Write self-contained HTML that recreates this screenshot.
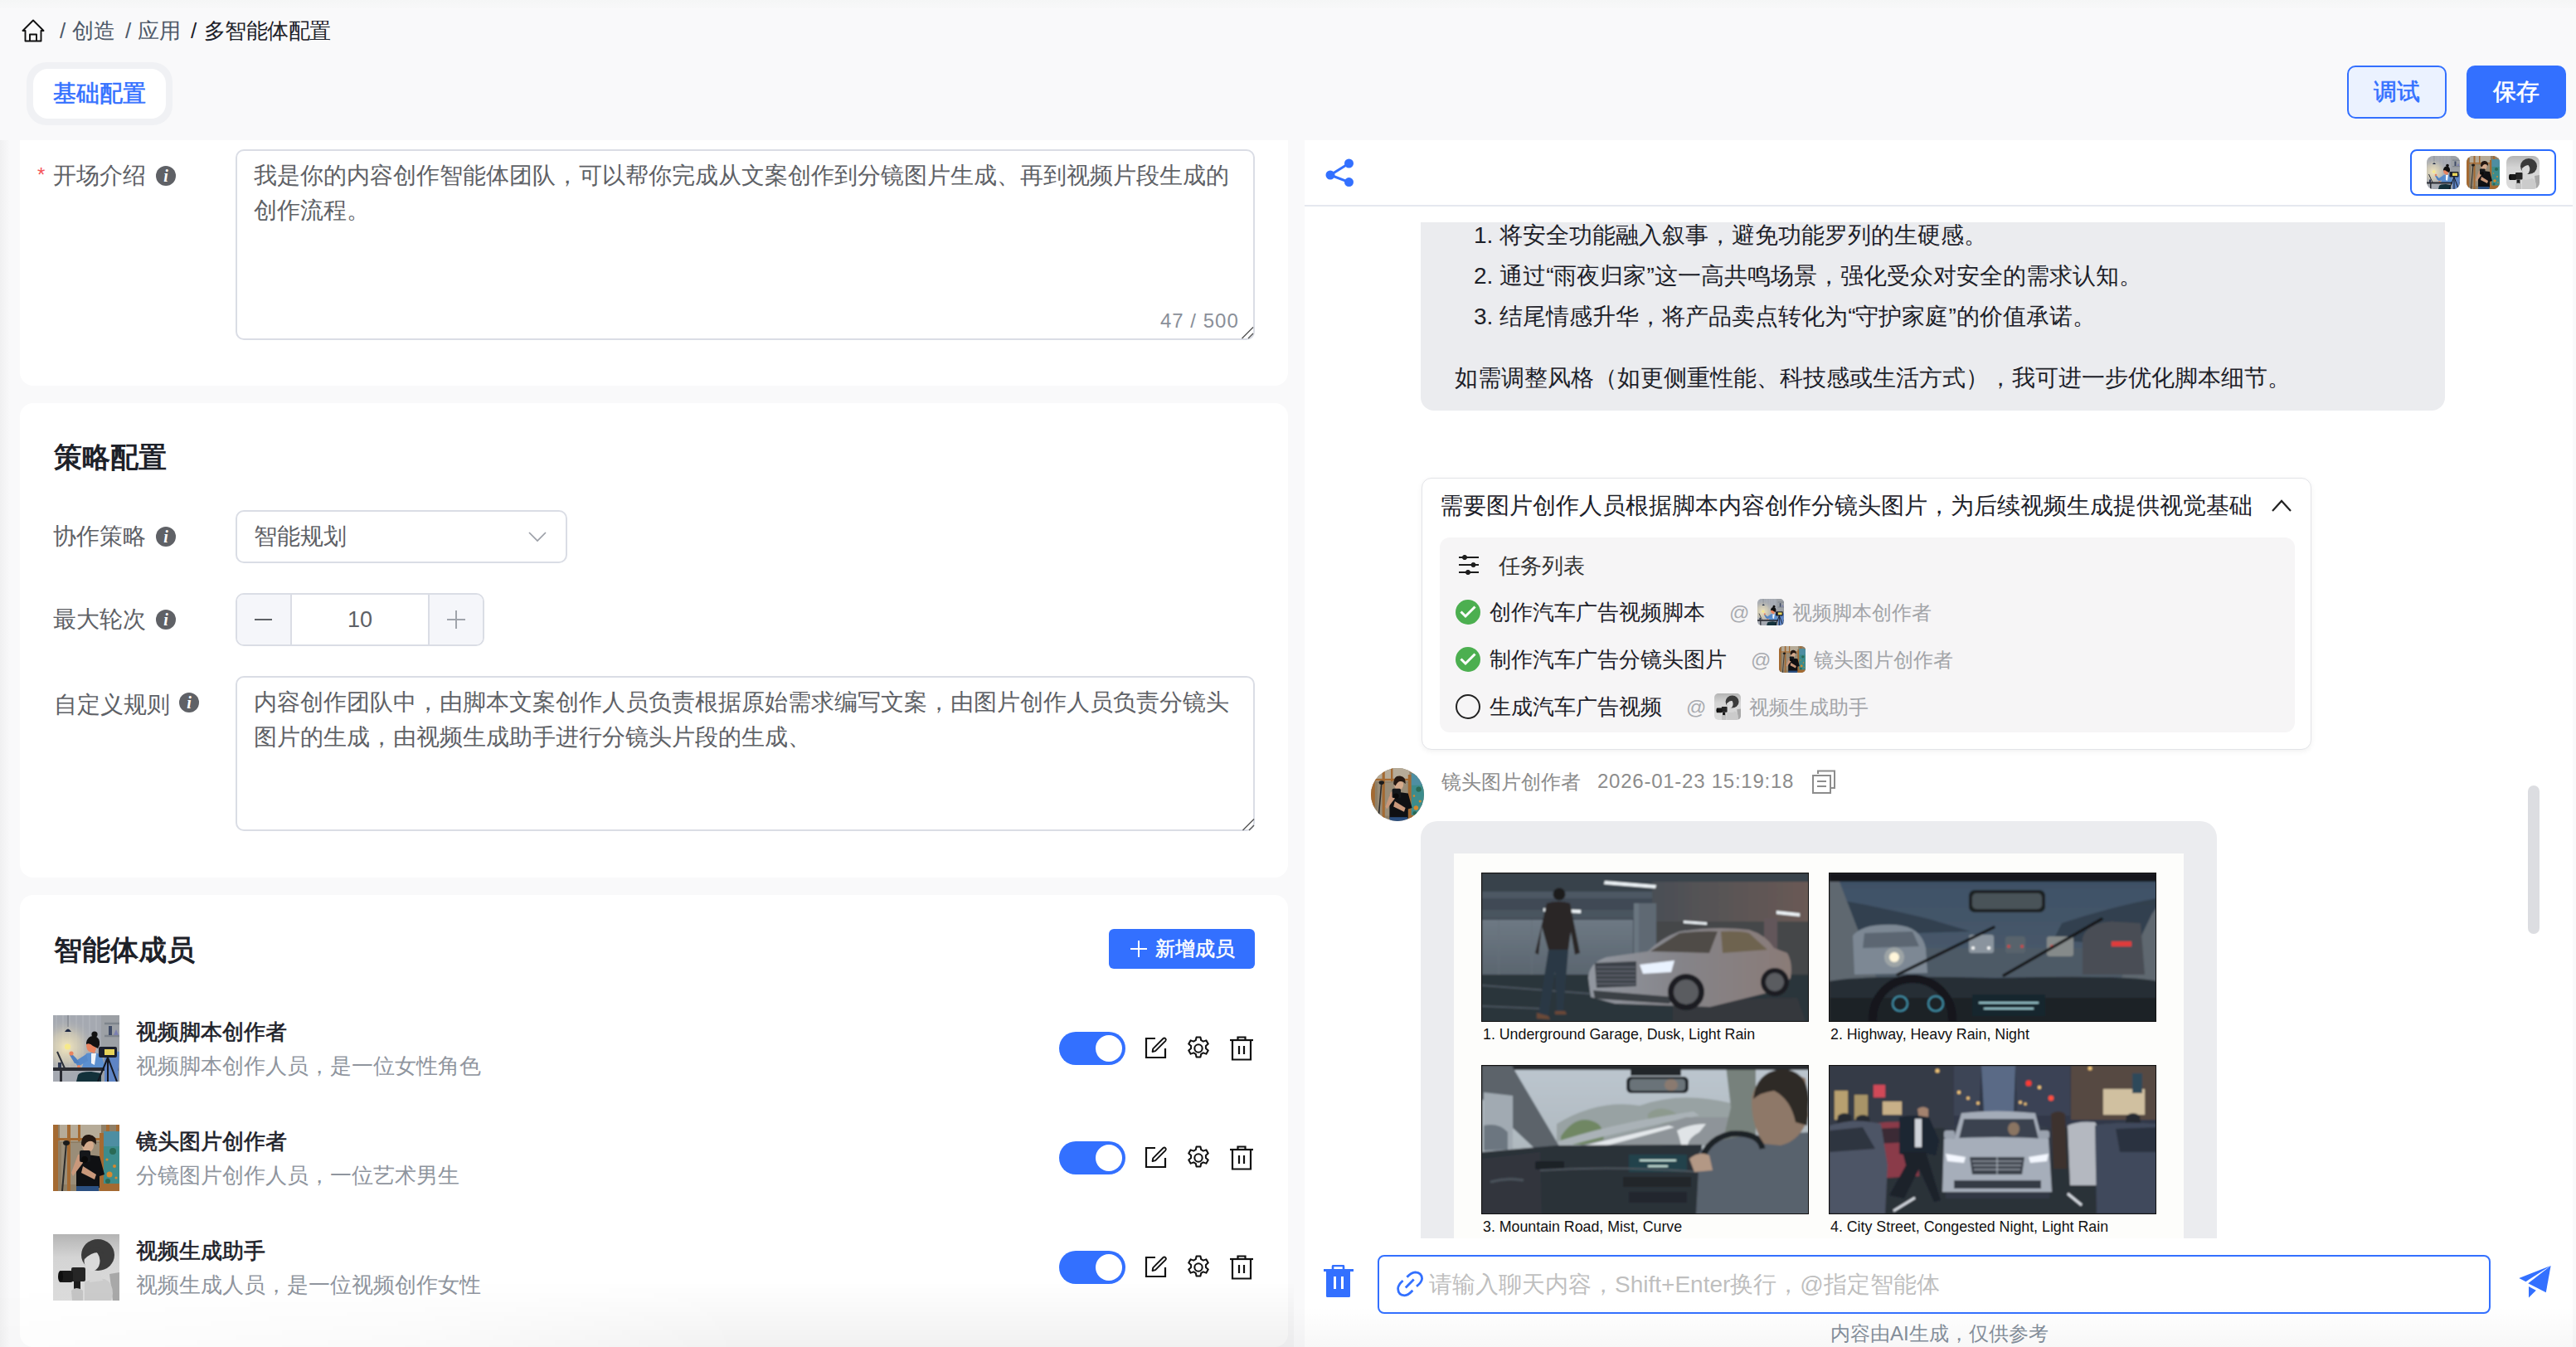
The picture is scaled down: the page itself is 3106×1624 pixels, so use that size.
<!DOCTYPE html>
<html><head><meta charset="utf-8">
<style>
*{box-sizing:border-box;margin:0;padding:0}
html,body{width:3106px;height:1624px;overflow:hidden;background:#f9f9fa;font-family:"Liberation Sans",sans-serif;color:#1d2129}
.a{position:absolute}
.t{white-space:nowrap}
.card{position:absolute;background:#fff;left:24px;width:1529px}
.lbl{position:absolute;font-size:28px;line-height:40px;color:#5e6166;white-space:nowrap}
.info{position:absolute;width:24px;height:24px;border-radius:50%;background:#5f6166;color:#fff;font:italic bold 20px/25px "Liberation Serif",serif;text-align:center}
.ta{position:absolute;border:2px solid #dadde5;border-radius:10px;background:#fff}
.tatext{position:absolute;font-size:28px;line-height:42px;color:#5e6166;white-space:nowrap}
</style></head><body>
<svg width="0" height="0" style="position:absolute"><defs>
<filter id="soft" x="-2%" y="-2%" width="104%" height="104%"><feGaussianBlur stdDeviation="0.8"/></filter>
<symbol id="av1" viewBox="0 0 80 80">
<radialGradient id="g1r" cx="0.2" cy="0.48" r="0.45"><stop offset="0" stop-color="#f3e7bd"/><stop offset="0.5" stop-color="#d7cfb6" stop-opacity="0.7"/><stop offset="1" stop-color="#a5a9b1" stop-opacity="0"/></radialGradient>
<rect width="80" height="80" fill="#a5a9b1"/>
<g stroke="#b3b7bd" stroke-width="1.2"><path d="M4 0V64M12 0V64M20 0V64M28 0V64M36 0V64M44 0V64M52 0V64"/></g>
<rect x="58" y="0" width="22" height="80" fill="#9ca0a5"/>
<rect width="80" height="80" fill="url(#g1r)"/>
<path d="M62 10H80M62 25H80" stroke="#7e848c" stroke-width="2.5"/><rect x="67" y="13" width="4" height="11" fill="#3f4b66"/><path d="M73 24L76 17L79 24Z" fill="#7a7fb0"/>
<path d="M18 0V14" stroke="#6b6f76" stroke-width="0.8"/><path d="M14 20Q18 13 22 20Z" fill="#1f2a44"/>
<circle cx="17.5" cy="38" r="3.6" fill="#f6e98a"/>
<path d="M5 44L14 64" stroke="#2a2e38" stroke-width="2"/><rect x="6" y="57" width="4" height="7" fill="#2f3a56"/>
<path d="M40 46Q48 44 58 47L64 66L34 66Z" fill="#5b8fcf"/>
<path d="M40 47L26 56L30 62L42 55Z" fill="#5689c9"/><path d="M22 46L28 52L32 58L26 58L20 48Z" fill="#4e7fbf"/>
<path d="M46 46L52 46L50 60L46 58Z" fill="#f2f4f7"/>
<circle cx="22" cy="46" r="2.6" fill="#e9845f"/><circle cx="31" cy="62" r="2" fill="#e9845f"/>
<path d="M40 35Q40 42 44 44L50 46L52 40L48 30Z" fill="#e9845f"/>
<path d="M40 33Q42 24 50 25Q57 27 56 36L54 40L48 37Q44 33 40 35Z" fill="#111"/><circle cx="50" cy="23" r="3.6" fill="#111"/>
<rect x="0" y="63" width="79" height="4" fill="#2a2c33"/><rect x="8" y="66" width="3" height="14" fill="#2a2c33"/>
<path d="M30 72Q32 68 46 68L58 70L58 80L28 80Z" fill="#13313a"/>
<path d="M62 42L80 44L78 80L62 80Z" fill="#5e84c4"/>
<rect x="55" y="38" width="22" height="13" rx="2" fill="#1b1f2c"/><rect x="62" y="41" width="12" height="7" fill="#e7d35a"/>
<g stroke="#141821" stroke-width="2"><path d="M66 51L54 80M66 51L77 80M66 51V80"/></g>
</symbol>
<symbol id="av2" viewBox="0 0 80 80">
<rect width="80" height="80" fill="#8f7f66"/>
<rect x="8" y="0" width="50" height="20" fill="#b6ab98"/><rect x="10" y="22" width="46" height="50" fill="#9a8d78"/>
<g fill="#a46a32"><rect x="0" y="0" width="6" height="80"/><rect x="17" y="0" width="4" height="80"/><rect x="30" y="0" width="3" height="20"/><rect x="0" y="16" width="60" height="3"/><rect x="56" y="10" width="5" height="70"/><rect x="64" y="0" width="4" height="10"/><rect x="76" y="0" width="4" height="10"/><rect x="59" y="70" width="21" height="10"/></g>
<rect x="61" y="8" width="19" height="63" fill="#3d8c8c"/>
<path d="M61 8H80V26H61Z" fill="#5a8fb0" opacity="0.6"/>
<g fill="#d68a2e"><circle cx="68" cy="60" r="3.5"/><circle cx="74" cy="50" r="2"/><circle cx="65" cy="42" r="1.6"/><circle cx="76" cy="64" r="1.6"/></g><g fill="#2a6a55"><circle cx="72" cy="32" r="4"/><circle cx="66" cy="68" r="3"/></g>
<path d="M16 22L11 80" stroke="#2a2a2a" stroke-width="2"/><ellipse cx="16" cy="22" rx="4" ry="3" fill="#1b1b1b"/>
<path d="M28 42Q32 37 40 36L56 38L62 60L56 62L56 76L28 76Z" fill="#0f1013"/>
<path d="M30 36L36 36L36 46L24 62L22 58Z" fill="#c9987b"/><path d="M36 50L52 60L50 66L34 58Z" fill="#c9987b"/>
<ellipse cx="42" cy="25" rx="7" ry="8" fill="#d4aa8c"/>
<path d="M34 24Q34 11 44 12Q53 13 52 24L49 21Q41 17 37 27Z" fill="#241812"/>
<rect x="32" y="31" width="13" height="14" rx="2" fill="#15171a"/><circle cx="38" cy="42" r="4" fill="#0a0a0a"/>
<rect x="28" y="74" width="27" height="6" fill="#2b4f80"/>
</symbol>
<symbol id="av3" viewBox="0 0 80 80">
<linearGradient id="g3bg" x1="0" y1="0" x2="0" y2="1"><stop offset="0" stop-color="#b4b4b4"/><stop offset="0.35" stop-color="#d4d4d4"/><stop offset="1" stop-color="#dcdcdc"/></linearGradient>
<rect width="80" height="80" fill="url(#g3bg)"/>
<path d="M68 48L80 46V80H72Z" fill="#a8a8a8"/>
<path d="M38 58Q50 52 62 54Q72 58 72 72L70 80L38 80Z" fill="#cbcbcb"/>
<path d="M46 40L56 44L60 56L44 58Z" fill="#d6d6d6"/>
<ellipse cx="54" cy="25" rx="20" ry="19" fill="#3b3b3b"/>
<ellipse cx="47" cy="32" rx="9.5" ry="12.5" fill="#dadada"/>
<path d="M36 26Q42 14 56 16L62 24Q50 18 38 30Z" fill="#3b3b3b"/>
<rect x="22" y="40" width="17" height="17" rx="2" fill="#262626"/>
<rect x="8" y="44" width="16" height="14" rx="3" fill="#1a1a1a"/><ellipse cx="9" cy="51" rx="3" ry="7" fill="#0e0e0e"/>
<rect x="25" y="57" width="8" height="15" fill="#1c1c1c"/>
<path d="M22 68Q28 62 36 68L36 80L23 80Z" fill="#c4c4c4"/>
</symbol>

<symbol id="img1" viewBox="0 0 395 180">
<linearGradient id="i1wall" x1="0" y1="0" x2="0" y2="1"><stop offset="0" stop-color="#6e7984"/><stop offset="1" stop-color="#59646e"/></linearGradient>
<linearGradient id="i1warm" x1="0" y1="0" x2="1" y2="0"><stop offset="0" stop-color="#4a4f55"/><stop offset="1" stop-color="#6a5a55"/></linearGradient>
<linearGradient id="i1car" x1="0" y1="0" x2="1" y2="0"><stop offset="0" stop-color="#9297a0"/><stop offset="0.45" stop-color="#858489"/><stop offset="1" stop-color="#8a7b77"/></linearGradient>
<g filter="url(#soft)">
<rect width="395" height="180" fill="#3f4a55"/>
<rect x="0" y="0" width="395" height="22" fill="#38424c"/>
<rect x="0" y="22" width="395" height="8" fill="#4d5863"/>
<rect x="205" y="10" width="190" height="50" fill="url(#i1warm)"/>
<rect x="0" y="44" width="205" height="10" fill="#4a555f"/>
<rect x="0" y="56" width="182" height="70" fill="url(#i1wall)"/>
<path d="M20 56V124M60 56V124" stroke="#66717b" stroke-width="1"/>
<rect x="183" y="36" width="27" height="90" fill="#5e6973"/><rect x="183" y="36" width="6" height="90" fill="#6b7680"/>
<rect x="210" y="58" width="185" height="64" fill="#45464a"/>
<rect x="340" y="54" width="16" height="70" fill="#62575a"/>
<g fill="#eef4f8"><path d="M148 9L210 14L209 18L147 13Z"/><path d="M74 42L119 44L119 48L74 46Z"/><path d="M243 57L271 59L271 62L243 60Z"/><path d="M355 45L383 48L383 52L355 49Z"/></g>
<rect x="0" y="122" width="395" height="58" fill="#2c343b"/>
<path d="M0 135L130 145M0 160L70 163" stroke="#4a545e" stroke-width="2"/>
<path d="M230 160Q300 150 380 150L390 178L230 178Z" fill="#3b3a3d" opacity="0.6"/>
<circle cx="93" cy="25" r="7.5" fill="#1f1d1c"/>
<path d="M78 36Q92 32 106 36L118 96L112 98L107 70L104 92L80 92L72 64L68 98L64 96Z" fill="#2a2726"/>
<path d="M80 92L104 92L98 165L90 168L88 118L80 172L68 170Z" fill="#2c3945"/>
<path d="M66 168L80 172L82 176L66 175Z M88 166L100 166L102 170L88 170Z" fill="#6b4a38"/>
<path d="M128 126Q129 108 150 101L200 94Q216 78 238 70Q282 63 322 68Q342 74 352 90L368 96Q375 108 372 126L360 140L275 161L160 157L131 149Z" fill="url(#i1car)"/>
<path d="M203 94L238 72Q262 69 284 70L274 96Z" fill="#4f4c46"/><path d="M288 70Q312 69 322 72L344 92L290 96Z" fill="#6e6350"/>
<path d="M136 108L186 106L186 136L138 138Z" fill="#3a3f46"/><path d="M138 113H185M138 118H185M138 123H185M138 128H185M138 133H185" stroke="#7b8089" stroke-width="1.1"/>
<path d="M190 110L232 105L228 119L194 121Z" fill="#eaf3ff"/>
<path d="M134 141L230 149L226 157L136 151Z" fill="#3b3f45"/>
<circle cx="246" cy="143" r="22" fill="#1c1f22"/><circle cx="246" cy="143" r="15" fill="#5a5c61"/>
<circle cx="353" cy="131" r="17" fill="#1c1f22"/><circle cx="353" cy="131" r="11" fill="#5a5c61"/>
</g>
</symbol>
<symbol id="img2" viewBox="0 0 395 180">
<g filter="url(#soft)">
<linearGradient id="i2sky" x1="0" y1="0" x2="0" y2="1"><stop offset="0" stop-color="#3d5066"/><stop offset="1" stop-color="#52606e"/></linearGradient>
<rect width="395" height="180" fill="url(#i2sky)"/>
<path d="M0 30Q60 40 120 55L170 70L0 75Z" fill="#2d3b48" opacity="0.8"/><path d="M280 60Q340 40 395 30V90L270 80Z" fill="#2e3c48" opacity="0.8"/>
<rect x="0" y="90" width="395" height="35" fill="#4e5a66"/>
<rect x="0" y="0" width="395" height="10" fill="#15191c"/>
<path d="M0 10L12 10L58 130L0 140Z" fill="#5e6770"/><path d="M395 40L395 140L350 130L388 50Z" fill="#5e6770"/>
<path d="M28 75Q40 60 80 62Q110 64 116 90L118 120L30 122Z" fill="#7d8894"/><path d="M42 72L100 70L108 88L40 90Z" fill="#5b6672"/>
<circle cx="78" cy="101" r="6" fill="#fff6da"/><circle cx="78" cy="101" r="12" fill="#fff6da" opacity="0.25"/>
<rect x="168" y="74" width="30" height="22" rx="3" fill="#8a949e"/><circle cx="173" cy="90" r="2" fill="#fff"/><circle cx="192" cy="90" r="2" fill="#fff"/>
<rect x="212" y="76" width="24" height="20" rx="3" fill="#59636c"/><circle cx="216" cy="88" r="1.8" fill="#e04040"/><circle cx="232" cy="88" r="1.8" fill="#e04040"/>
<rect x="262" y="76" width="32" height="24" rx="3" fill="#858a8a"/><circle cx="268" cy="88" r="2" fill="#e04848"/>
<path d="M305 78Q310 60 340 58L375 60L380 122L305 122Z" fill="#494d54"/><rect x="340" y="82" width="24" height="6" fill="#e03a3a"/>
<g stroke="#121518" stroke-width="3.5" stroke-linecap="round"><path d="M82 122L198 65"/><path d="M210 123L328 55"/></g>
<rect x="168" y="20" width="92" height="27" rx="7" fill="#1b2024"/><rect x="172" y="24" width="84" height="19" rx="5" fill="#4a5359"/>
<path d="M0 130Q40 122 200 126Q360 122 395 130V180H0Z" fill="#262e36"/>
<rect x="0" y="150" width="395" height="30" fill="#1c2127"/>
<circle cx="100" cy="175" r="48" fill="none" stroke="#14181c" stroke-width="10"/>
<circle cx="85" cy="157" r="9" fill="none" stroke="#4aa8c4" stroke-width="1.5"/><circle cx="128" cy="157" r="9" fill="none" stroke="#4aa8c4" stroke-width="1.5"/>
<rect x="172" y="146" width="88" height="26" fill="#17252e"/><path d="M180 156H252M186 163H246" stroke="#9ac8d0" stroke-width="2"/>
</g>
</symbol>
<symbol id="img3" viewBox="0 0 395 180">
<linearGradient id="i3sky" x1="0" y1="0" x2="0" y2="1"><stop offset="0" stop-color="#bcc6cf"/><stop offset="1" stop-color="#a5aeb2"/></linearGradient>
<g filter="url(#soft)">
<rect width="395" height="180" fill="url(#i3sky)"/>
<path d="M90 70Q140 40 190 48Q240 30 300 45V95H90Z" fill="#98a2a3"/>
<path d="M95 85Q115 55 140 70Q150 80 145 95H95Z" fill="#6f8763"/>
<path d="M200 58Q215 45 235 58L240 70H200Z" fill="#8d9a8e"/>
<path d="M80 95Q150 70 255 55L262 60Q160 80 90 100Z" fill="#aab2b7"/>
<path d="M112 97Q190 80 246 62L300 62L300 95L140 100Z" fill="#8e9499"/>
<path d="M120 97Q180 82 225 72L232 74Q190 86 135 100Z" fill="#e4e8eb"/>
<path d="M235 78Q250 70 270 70L262 80Q250 86 248 95L240 95Q238 86 235 78Z" fill="#e0e4e7"/>
<path d="M294 0L330 0L330 90L290 92L300 50Z" fill="#77817b"/>
<rect x="0" y="0" width="395" height="5" fill="#252a2f"/>
<path d="M0 0H36L95 100L68 104L0 40Z" fill="#5b636b"/>
<path d="M2 32L37 36L37 106L2 108Z" fill="#a1aab2"/><path d="M2 72Q20 68 31 80L31 101L2 102Z" fill="#6c7680"/>
<rect x="179" y="0" width="61" height="12" fill="#22272b"/>
<rect x="174" y="13" width="75" height="20" rx="6" fill="#1d2226"/><rect x="178" y="16" width="67" height="14" rx="4" fill="#6b7379"/><ellipse cx="228" cy="23" rx="8" ry="7" fill="#8a7a70"/>
<path d="M0 104L90 96L265 95L262 180H0Z" fill="#2b3138"/>
<path d="M0 112L70 104L72 180H0Z" fill="#30363e"/><path d="M10 140Q30 134 50 138" stroke="#4b535b" stroke-width="3" fill="none"/>
<rect x="64" y="115" width="35" height="10" rx="2" fill="#1e2328"/><rect x="170" y="134" width="82" height="12" fill="#22272c"/><rect x="177" y="152" width="70" height="13" fill="#23282d"/>
<rect x="177" y="107" width="70" height="21" fill="#23424c"/><path d="M190 114H234M200 121H224" stroke="#c8e4dc" stroke-width="2.2"/>
<path d="M70 126Q160 120 262 128" stroke="#4e565e" stroke-width="2" fill="none"/>
<path d="M258 180L262 104Q280 86 330 84L395 80V180Z" fill="#58626d"/>
<path d="M263 126Q265 90 300 82Q335 80 338 100" stroke="#1d2125" stroke-width="7" fill="none"/>
<path d="M325 45Q325 25 340 15Q365 5 390 15L394 60Q385 90 360 96L340 94Q326 75 325 45Z" fill="#8e7868"/>
<path d="M327 40Q330 8 360 4Q392 4 394 40L392 72L378 68Q372 40 352 30Q336 32 327 40Z" fill="#2e2925"/>
<path d="M250 112Q262 102 274 108L278 126L256 128Z" fill="#b39885"/>
</g>
</symbol>
<symbol id="img4" viewBox="0 0 395 180">
<linearGradient id="i4bg" x1="0" y1="0" x2="0" y2="1"><stop offset="0" stop-color="#2c3443"/><stop offset="1" stop-color="#394152"/></linearGradient>
<g filter="url(#soft)">
<rect width="395" height="180" fill="url(#i4bg)"/>
<rect x="0" y="0" width="150" height="75" fill="#343b47"/>
<path d="M150 0H183L180 60H150Z" fill="#3c4556"/><path d="M183 0H224L222 55H186Z" fill="#5a6a86"/><path d="M224 0H290V60H226Z" fill="#3a4354"/>
<rect x="6" y="30" width="16" height="35" fill="#b8a070"/><rect x="30" y="35" width="16" height="30" fill="#a89468"/>
<rect x="53" y="23" width="14" height="15" fill="#d04858"/><rect x="64" y="43" width="23" height="16" fill="#c8b088"/>
<rect x="291" y="0" width="104" height="65" fill="#564842"/><rect x="330" y="28" width="50" height="31" fill="#d0c0a0"/><rect x="365" y="9" width="12" height="24" fill="#2f4a5a"/>
<g fill="#f2c678"><circle cx="130" cy="6" r="2.5"/><circle cx="156" cy="32" r="2.2"/><circle cx="167" cy="39" r="2"/><circle cx="179" cy="45" r="2"/><circle cx="230" cy="44" r="2"/><circle cx="236" cy="46" r="1.8"/><circle cx="253" cy="26" r="2.2"/><circle cx="314" cy="3" r="2.5"/><circle cx="190" cy="58" r="1.6"/><circle cx="210" cy="58" r="1.6"/></g>
<circle cx="240" cy="21" r="3.5" fill="#ff3a30"/><circle cx="267" cy="39" r="3.2" fill="#ff5040"/>
<g fill="#252a33"><path d="M10 60Q18 54 26 60L28 75H8Z"/><path d="M32 62Q40 56 48 62L50 75H30Z"/><path d="M358 60Q366 54 374 60L376 75H356Z"/></g>
<rect x="0" y="75" width="395" height="105" fill="#2a3139"/>
<path d="M138 75L160 70L248 70L270 76L265 160H140Z" fill="#3a4250" opacity="0.5"/>
<path d="M43 72Q60 66 103 68L108 133L50 136Z" fill="#8a3a48"/><path d="M50 76L98 74L100 92L52 94Z" fill="#3a2c34"/>
<path d="M0 72Q30 62 62 70L70 120L67 178H0Z" fill="#4d5566"/><path d="M0 78L40 74L55 100L0 104Z" fill="#2e3440"/>
<path d="M106 52Q113 47 119 52L119 64L108 64Z" fill="#a3826e"/>
<path d="M84 62Q100 58 120 62L132 90L128 108L108 104L100 110L84 106Z" fill="#1f2530"/><rect x="103" y="64" width="8" height="34" fill="#cfd3da"/>
<path d="M88 104L116 104L134 162L126 164L108 124L90 160L72 156L92 120Z" fill="#1c222c"/>
<path d="M159 57Q200 52 248 57L256 88H150Z" fill="#a4acb8"/>
<path d="M162 64L246 64L252 88L156 88Z" fill="#3b4350"/><ellipse cx="222" cy="76" rx="7" ry="8" fill="#8a7462"/>
<path d="M138 88Q200 84 264 88L268 152L136 152Z" fill="#a6aeba"/>
<rect x="138" y="78" width="13" height="10" rx="3" fill="#9aa2ae"/><rect x="252" y="78" width="13" height="10" rx="3" fill="#9aa2ae"/>
<path d="M169 110H235L232 131H172Z" fill="#3a404a"/><path d="M172 115H232M173 120H231M174 125H230" stroke="#c2c8d2" stroke-width="1"/><path d="M202 110V131" stroke="#c2c8d2" stroke-width="1"/>
<path d="M140 106L164 110L162 117L142 115Z" fill="#f4f8ff"/><path d="M240 110L264 106L262 115L242 117Z" fill="#f4f8ff"/>
<rect x="150" y="138" width="105" height="10" fill="#353a44"/>
<path d="M267 58Q276 52 284 58L286 124L270 124Z" fill="#3e322e"/>
<path d="M287 72Q300 66 320 68L332 88L330 144L290 144Z" fill="#b4b8c0"/>
<path d="M320 72Q350 66 395 70V178H322Z" fill="#404a5c"/><path d="M345 76L395 74V104L350 104Z" fill="#2a3240"/>
<path d="M77 175L103 159M287 154L304 168" stroke="#d8dde4" stroke-width="3"/>
</g>
</symbol>
</defs></svg>
<!-- top strip -->
<div class="a" style="left:0;top:0;width:3106px;height:10px;background:linear-gradient(to bottom,#f5f6f6,#f8f8f9)"></div>

<!-- breadcrumb -->
<svg class="a" style="left:26px;top:23px" width="28" height="28" viewBox="0 0 28 28" fill="none" stroke="#111" stroke-width="1.9" stroke-linejoin="round">
<path d="M1.5 14 L14 1.5 L26.5 14 L23.5 14 L23.5 26.5 L4.5 26.5 L4.5 14 Z"/><path d="M10 26.5 V18.5 H18 V26.5"/></svg>
<div class="a t" style="left:72px;top:17px;font-size:26px;line-height:40px;color:#4e5969">/</div>
<div class="a t" style="left:87px;top:17px;font-size:26px;line-height:40px;color:#4e5969">创造</div>
<div class="a t" style="left:151px;top:17px;font-size:26px;line-height:40px;color:#4e5969">/</div>
<div class="a t" style="left:166px;top:17px;font-size:26px;line-height:40px;color:#4e5969">应用</div>
<div class="a t" style="left:230px;top:17px;font-size:26px;line-height:40px;color:#1d2129">/</div>
<div class="a t" style="left:246px;top:17px;font-size:26px;line-height:40px;color:#1d2129;letter-spacing:-0.6px">多智能体配置</div>

<!-- tab -->
<div class="a" style="left:32px;top:75px;width:176px;height:76px;border-radius:24px;background:#f0f1f4"></div>
<div class="a" style="left:40px;top:83px;width:160px;height:60px;border-radius:18px;background:#fff"></div>
<div class="a t" style="left:64px;top:93px;font-size:28px;line-height:40px;color:#3370ff;-webkit-text-stroke:0.6px #3370ff">基础配置</div>

<!-- buttons -->
<div class="a" style="left:2830px;top:79px;width:120px;height:64px;border:2px solid #3370ff;border-radius:10px;background:#ebf2ff;color:#3370ff;font-size:28px;line-height:60px;text-align:center;-webkit-text-stroke:0.6px #3370ff">调试</div>
<div class="a" style="left:2974px;top:79px;width:120px;height:64px;border-radius:10px;background:#3370ff;color:#fff;font-size:28px;line-height:64px;text-align:center;-webkit-text-stroke:0.6px #fff">保存</div>

<div class="a" style="left:0;top:169px;width:12px;height:1455px;background:linear-gradient(to right,#f0f0f1,#f9f9fa)"></div>
<!-- LEFT CARD 1 -->
<div class="card" style="top:169px;height:296px;border-radius:0 0 16px 16px"></div>
<div class="a t" style="left:45px;top:196px;font-size:24px;line-height:30px;color:#f5555a">*</div>
<div class="lbl" style="left:64px;top:192px">开场介绍</div>
<div class="info" style="left:188px;top:200px">i</div>
<div class="ta" style="left:284px;top:180px;width:1229px;height:230px"></div>
<div class="tatext" style="left:306px;top:191px">我是你的内容创作智能体团队，可以帮你完成从文案创作到分镜图片生成、再到视频片段生成的<br>创作流程。</div>
<div class="a t" style="left:1399px;top:367px;font-size:24px;line-height:40px;color:#8a8f99;letter-spacing:1px">47 / 500</div>

<!-- LEFT CARD 2 -->
<div class="card" style="top:486px;height:572px;border-radius:16px"></div>
<div class="a t" style="left:65px;top:531px;font-size:34px;line-height:40px;font-weight:bold;color:#1d2129">策略配置</div>
<div class="lbl" style="left:64px;top:627px">协作策略</div>
<div class="info" style="left:188px;top:635px">i</div>
<div class="lbl" style="left:64px;top:727px">最大轮次</div>
<div class="info" style="left:188px;top:735px">i</div>
<div class="lbl" style="left:65px;top:830px">自定义规则</div>
<div class="info" style="left:216px;top:835px">i</div>

<div class="ta" style="left:284px;top:615px;width:400px;height:64px"></div>
<div class="tatext" style="left:306px;top:626px">智能规划</div>
<svg class="a" style="left:636px;top:639px" width="24" height="16" viewBox="0 0 24 16"><path d="M2 3 L12 13 L22 3" fill="none" stroke="#9a9ea6" stroke-width="1.7"/></svg>

<div class="ta" style="left:284px;top:715px;width:300px;height:64px;overflow:hidden">
  <div class="a" style="left:0;top:0;width:66px;height:60px;background:#f5f6fa;border-right:2px solid #dadde5"></div>
  <div class="a" style="right:0;top:0;width:66px;height:60px;background:#f5f6fa;border-left:2px solid #dadde5"></div>
</div>
<div class="a" style="left:307px;top:746px;width:21px;height:2px;background:#5e6166"></div>
<div class="a" style="left:539px;top:746px;width:22px;height:2px;background:#a0a4ab"></div>
<div class="a" style="left:549px;top:736px;width:2px;height:22px;background:#a0a4ab"></div>
<div class="a t" style="left:419px;top:727px;font-size:27px;line-height:40px;color:#5e6166">10</div>

<div class="ta" style="left:284px;top:815px;width:1229px;height:187px"></div>
<div class="tatext" style="left:306px;top:826px">内容创作团队中，由脚本文案创作人员负责根据原始需求编写文案，由图片创作人员负责分镜头<br>图片的生成，由视频生成助手进行分镜头片段的生成、</div>

<svg class="a" style="left:1496px;top:393px" width="16" height="16" viewBox="0 0 16 16" stroke="#555" stroke-width="1.4"><path d="M1.5 15L15 1.5M9 15L15 9"/></svg>
<svg class="a" style="left:1497px;top:986px" width="16" height="16" viewBox="0 0 16 16" stroke="#555" stroke-width="1.4"><path d="M1.5 15L15 1.5M9 15L15 9"/></svg>
<!-- LEFT CARD 3 -->
<div class="card" style="top:1079px;height:545px;border-radius:16px"></div>
<div class="a t" style="left:65px;top:1125px;font-size:34px;line-height:40px;font-weight:bold;color:#1d2129">智能体成员</div>
<div class="a" style="left:1337px;top:1120px;width:176px;height:48px;border-radius:6px;background:#3370ff"></div>
<div class="a" style="left:1363px;top:1143px;width:20px;height:2px;background:#fff"></div>
<div class="a" style="left:1372px;top:1134px;width:2px;height:20px;background:#fff"></div>
<div class="a t" style="left:1393px;top:1124px;font-size:24px;line-height:40px;color:#fff;-webkit-text-stroke:0.5px #fff">新增成员</div>

<div class="a" style="left:64px;top:1224px;width:80px;height:80px;overflow:hidden"><svg width="80" height="80"><use href="#av1"/></svg></div>
<div class="a t" style="left:164px;top:1226px;font-size:26px;line-height:36px;color:#1d2129;-webkit-text-stroke:0.6px #1d2129">视频脚本创作者</div>
<div class="a t" style="left:164px;top:1267px;font-size:26px;line-height:36px;color:#8f959e">视频脚本创作人员，是一位女性角色</div>
<div class="a" style="left:1277px;top:1244px;width:80px;height:40px;border-radius:20px;background:#3370ff"></div>
<div class="a" style="left:1321px;top:1248px;width:32px;height:32px;border-radius:50%;background:#fff"></div>
<svg class="a" style="left:1378px;top:1247px" width="32" height="32" viewBox="0 0 32 32" fill="none" stroke="#111" stroke-width="2.2"><path d="M15 5H4V28H27V17"/><path d="M12.3 17.3L24.6 5A2 2 0 0 1 27.4 7.8L15.1 20.1L11.6 21Z" stroke-width="1.9" stroke-linejoin="round"/></svg>
<svg class="a" style="left:1428px;top:1247px" width="34" height="34" viewBox="0 0 24 24" fill="none" stroke="#111" stroke-width="1.45"><path d="M10.3 2.5h3.4l.6 2.6 1.8 1 2.5-.9 1.7 2.9-2 1.8v2.1l2 1.8-1.7 2.9-2.5-.9-1.8 1-.6 2.6h-3.4l-.6-2.6-1.8-1-2.5.9-1.7-2.9 2-1.8v-2.1l-2-1.8 1.7-2.9 2.5.9 1.8-1z" stroke-linejoin="round"/><circle cx="12" cy="12" r="3.3"/></svg>
<svg class="a" style="left:1482px;top:1249px" width="30" height="30" viewBox="0 0 30 30" fill="none" stroke="#111" stroke-width="2.2"><path d="M1 5 H29"/><path d="M10.5 5 V1.5 H19.5 V5"/><path d="M4 5 V28.5 H26 V5"/><path d="M12 12 V22 M18 12 V22"/></svg>
<div class="a" style="left:64px;top:1356px;width:80px;height:80px;overflow:hidden"><svg width="80" height="80"><use href="#av2"/></svg></div>
<div class="a t" style="left:164px;top:1358px;font-size:26px;line-height:36px;color:#1d2129;-webkit-text-stroke:0.6px #1d2129">镜头图片创作者</div>
<div class="a t" style="left:164px;top:1399px;font-size:26px;line-height:36px;color:#8f959e">分镜图片创作人员，一位艺术男生</div>
<div class="a" style="left:1277px;top:1376px;width:80px;height:40px;border-radius:20px;background:#3370ff"></div>
<div class="a" style="left:1321px;top:1380px;width:32px;height:32px;border-radius:50%;background:#fff"></div>
<svg class="a" style="left:1378px;top:1379px" width="32" height="32" viewBox="0 0 32 32" fill="none" stroke="#111" stroke-width="2.2"><path d="M15 5H4V28H27V17"/><path d="M12.3 17.3L24.6 5A2 2 0 0 1 27.4 7.8L15.1 20.1L11.6 21Z" stroke-width="1.9" stroke-linejoin="round"/></svg>
<svg class="a" style="left:1428px;top:1379px" width="34" height="34" viewBox="0 0 24 24" fill="none" stroke="#111" stroke-width="1.45"><path d="M10.3 2.5h3.4l.6 2.6 1.8 1 2.5-.9 1.7 2.9-2 1.8v2.1l2 1.8-1.7 2.9-2.5-.9-1.8 1-.6 2.6h-3.4l-.6-2.6-1.8-1-2.5.9-1.7-2.9 2-1.8v-2.1l-2-1.8 1.7-2.9 2.5.9 1.8-1z" stroke-linejoin="round"/><circle cx="12" cy="12" r="3.3"/></svg>
<svg class="a" style="left:1482px;top:1381px" width="30" height="30" viewBox="0 0 30 30" fill="none" stroke="#111" stroke-width="2.2"><path d="M1 5 H29"/><path d="M10.5 5 V1.5 H19.5 V5"/><path d="M4 5 V28.5 H26 V5"/><path d="M12 12 V22 M18 12 V22"/></svg>
<div class="a" style="left:64px;top:1488px;width:80px;height:80px;overflow:hidden"><svg width="80" height="80"><use href="#av3"/></svg></div>
<div class="a t" style="left:164px;top:1490px;font-size:26px;line-height:36px;color:#1d2129;-webkit-text-stroke:0.6px #1d2129">视频生成助手</div>
<div class="a t" style="left:164px;top:1531px;font-size:26px;line-height:36px;color:#8f959e">视频生成人员，是一位视频创作女性</div>
<div class="a" style="left:1277px;top:1508px;width:80px;height:40px;border-radius:20px;background:#3370ff"></div>
<div class="a" style="left:1321px;top:1512px;width:32px;height:32px;border-radius:50%;background:#fff"></div>
<svg class="a" style="left:1378px;top:1511px" width="32" height="32" viewBox="0 0 32 32" fill="none" stroke="#111" stroke-width="2.2"><path d="M15 5H4V28H27V17"/><path d="M12.3 17.3L24.6 5A2 2 0 0 1 27.4 7.8L15.1 20.1L11.6 21Z" stroke-width="1.9" stroke-linejoin="round"/></svg>
<svg class="a" style="left:1428px;top:1511px" width="34" height="34" viewBox="0 0 24 24" fill="none" stroke="#111" stroke-width="1.45"><path d="M10.3 2.5h3.4l.6 2.6 1.8 1 2.5-.9 1.7 2.9-2 1.8v2.1l2 1.8-1.7 2.9-2.5-.9-1.8 1-.6 2.6h-3.4l-.6-2.6-1.8-1-2.5.9-1.7-2.9 2-1.8v-2.1l-2-1.8 1.7-2.9 2.5.9 1.8-1z" stroke-linejoin="round"/><circle cx="12" cy="12" r="3.3"/></svg>
<svg class="a" style="left:1482px;top:1513px" width="30" height="30" viewBox="0 0 30 30" fill="none" stroke="#111" stroke-width="2.2"><path d="M1 5 H29"/><path d="M10.5 5 V1.5 H19.5 V5"/><path d="M4 5 V28.5 H26 V5"/><path d="M12 12 V22 M18 12 V22"/></svg>

<!-- RIGHT PANEL -->
<div class="a" style="left:1573px;top:169px;width:1529px;height:1455px;background:#fff"></div>
<div class="a" style="left:1573px;top:247px;width:1529px;height:2px;background:#e5e8ef"></div>
<svg class="a" style="left:1594px;top:186px" width="42" height="42" viewBox="0 0 42 42" fill="#3370ff"><path d="M10 25 L32.5 11 M10 25 L32.5 33.6" stroke="#3370ff" stroke-width="3"/><circle cx="10" cy="25" r="5.5"/><circle cx="32.5" cy="11" r="5.5"/><circle cx="32.5" cy="33.6" r="5.5"/></svg>
<div class="a" style="left:2906px;top:180px;width:176px;height:56px;border:2.5px solid #2a6bff;border-radius:8px"></div>


<!-- header avatars -->
<div class="a" style="left:2926px;top:188px;width:40px;height:40px;border-radius:8px;overflow:hidden"><svg width="40" height="40"><use href="#av1"/></svg></div>
<div class="a" style="left:2974px;top:188px;width:40px;height:40px;border-radius:8px;overflow:hidden"><svg width="40" height="40"><use href="#av2"/></svg></div>
<div class="a" style="left:3022px;top:188px;width:40px;height:40px;border-radius:8px;overflow:hidden"><svg width="40" height="40"><use href="#av3"/></svg></div>

<!-- chat scroll area -->
<div class="a" style="left:1573px;top:268px;width:1529px;height:1225px;overflow:hidden">
 <div class="a" style="left:140px;top:-40px;width:1235px;height:267px;border-radius:16px;background:#ebecef"></div>
 <div class="a t" style="left:204px;top:-9px;font-size:28px;line-height:49px;color:#1d2129">1. 将安全功能融入叙事，避免功能罗列的生硬感。<br>2. 通过“雨夜归家”这一高共鸣场景，强化受众对安全的需求认知。<br>3. 结尾情感升华，将产品卖点转化为“守护家庭”的价值承诺。</div>
 <div class="a t" style="left:181px;top:163px;font-size:28px;line-height:49px;color:#1d2129">如需调整风格（如更侧重性能、科技感或生活方式），我可进一步优化脚本细节。</div>
<div class="a" style="left:141px;top:308px;width:1073px;height:328px;border:1.5px solid #e3e4e8;border-radius:12px;background:#fff;box-shadow:0 2px 6px rgba(0,0,0,0.06)"></div>
<div class="a t" style="left:163px;top:321px;font-size:28px;line-height:42px;color:#1d2129">需要图片创作人员根据脚本内容创作分镜头图片，为后续视频生成提供视觉基础</div>
<svg class="a" style="left:1165px;top:332px" width="26" height="18" viewBox="0 0 26 18"><path d="M2 16 L13 4 L24 16" fill="none" stroke="#222" stroke-width="2.2"/></svg>
<div class="a" style="left:163px;top:380px;width:1031px;height:235px;border-radius:12px;background:#f6f5f6"></div>
<svg class="a" style="left:185px;top:399px" width="26" height="26" viewBox="0 0 26 26" fill="#1d1d1d" stroke="#1d1d1d"><path d="M1 5H25M1 14H25M1 23H25" stroke-width="2"/><circle cx="8" cy="5" r="2.6"/><circle cx="18.5" cy="14" r="2.6"/><circle cx="12" cy="23" r="2.6"/></svg>
<div class="a t" style="left:234px;top:394px;font-size:26px;line-height:40px;color:#333">任务列表</div>
<svg class="a" style="left:182px;top:455px" width="30" height="30" viewBox="0 0 30 30"><circle cx="15" cy="15" r="15" fill="#4caf50"/><path d="M6.5 14.5L12 20L23.5 8.5" fill="none" stroke="#fff" stroke-width="3"/></svg>
<div class="a t" style="left:223px;top:450px;font-size:26px;line-height:40px;color:#1d2129"><span>创作汽车广告视频脚本</span><span style="display:inline-block;width:29px"></span><span style="color:#a9abb0;font-size:24px">@</span><span style="display:inline-block;width:10px"></span><span style="display:inline-block;width:32px;height:32px;border-radius:5px;overflow:hidden;vertical-align:-7px"><svg width="32" height="32"><use href="#av1"/></svg></span><span style="display:inline-block;width:10px"></span><span style="color:#a2a4a8;font-size:24px">视频脚本创作者</span></div>
<svg class="a" style="left:182px;top:512px" width="30" height="30" viewBox="0 0 30 30"><circle cx="15" cy="15" r="15" fill="#4caf50"/><path d="M6.5 14.5L12 20L23.5 8.5" fill="none" stroke="#fff" stroke-width="3"/></svg>
<div class="a t" style="left:223px;top:507px;font-size:26px;line-height:40px;color:#1d2129"><span>制作汽车广告分镜头图片</span><span style="display:inline-block;width:29px"></span><span style="color:#a9abb0;font-size:24px">@</span><span style="display:inline-block;width:10px"></span><span style="display:inline-block;width:32px;height:32px;border-radius:5px;overflow:hidden;vertical-align:-7px"><svg width="32" height="32"><use href="#av2"/></svg></span><span style="display:inline-block;width:10px"></span><span style="color:#a2a4a8;font-size:24px">镜头图片创作者</span></div>
<svg class="a" style="left:182px;top:569px" width="30" height="30" viewBox="0 0 30 30"><circle cx="15" cy="15" r="14" fill="none" stroke="#222" stroke-width="2"/></svg>
<div class="a t" style="left:223px;top:564px;font-size:26px;line-height:40px;color:#1d2129"><span>生成汽车广告视频</span><span style="display:inline-block;width:29px"></span><span style="color:#a9abb0;font-size:24px">@</span><span style="display:inline-block;width:10px"></span><span style="display:inline-block;width:32px;height:32px;border-radius:5px;overflow:hidden;vertical-align:-7px"><svg width="32" height="32"><use href="#av3"/></svg></span><span style="display:inline-block;width:10px"></span><span style="color:#a2a4a8;font-size:24px">视频生成助手</span></div>
<div class="a" style="left:80px;top:658px;width:64px;height:64px;border-radius:50%;overflow:hidden"><svg width="64" height="64"><use href="#av2"/></svg></div>
<div class="a t" style="left:165px;top:655px;font-size:24px;line-height:40px;color:#8c8c8c">镜头图片创作者</div>
<div class="a t" style="left:353px;top:654px;font-size:24px;line-height:40px;color:#8c8c8c;letter-spacing:0.75px">2026-01-23 15:19:18</div>
<svg class="a" style="left:611px;top:660px" width="30" height="30" viewBox="0 0 30 30" fill="none" stroke="#8c8c8c" stroke-width="2"><path d="M8 5V1.5H28V22H23"/><rect x="2" y="7" width="21" height="21"/><path d="M7 14H18M7 20H18"/></svg>
<div class="a" style="left:140px;top:722px;width:960px;height:600px;border-radius:20px;background:#ebecef"></div>
<div class="a" style="left:180px;top:761px;width:880px;height:600px;background:#fdfdfb"></div>
<div class="a" style="left:213px;top:784px;width:395px;height:180px;border:1.5px solid #111;overflow:hidden;background:#333"><svg width="395" height="180" style="display:block"><use href="#img1"/></svg></div>
<div class="a t" style="left:215px;top:959px;font-size:17.8px;line-height:40px;color:#111">1. Underground Garage, Dusk, Light Rain</div>
<div class="a" style="left:632px;top:784px;width:395px;height:180px;border:1.5px solid #111;overflow:hidden;background:#333"><svg width="395" height="180" style="display:block"><use href="#img2"/></svg></div>
<div class="a t" style="left:634px;top:959px;font-size:17.8px;line-height:40px;color:#111">2. Highway, Heavy Rain, Night</div>
<div class="a" style="left:213px;top:1016px;width:395px;height:180px;border:1.5px solid #111;overflow:hidden;background:#333"><svg width="395" height="180" style="display:block"><use href="#img3"/></svg></div>
<div class="a t" style="left:215px;top:1191px;font-size:17.8px;line-height:40px;color:#111">3. Mountain Road, Mist, Curve</div>
<div class="a" style="left:632px;top:1016px;width:395px;height:180px;border:1.5px solid #111;overflow:hidden;background:#333"><svg width="395" height="180" style="display:block"><use href="#img4"/></svg></div>
<div class="a t" style="left:634px;top:1191px;font-size:17.8px;line-height:40px;color:#111">4. City Street, Congested Night, Light Rain</div>
</div>
<!-- scrollbar -->
<div class="a" style="left:3048px;top:947px;width:14px;height:179px;border-radius:7px;background:#dcdde1"></div>
<!-- input row -->
<svg class="a" style="left:1595px;top:1525px" width="38" height="40" viewBox="0 0 38 40"><path d="M1 6.5H37" stroke="#3370ff" stroke-width="3"/><rect x="12" y="1" width="13" height="6" rx="1" fill="none" stroke="#3370ff" stroke-width="2.6"/><rect x="4" y="6" width="29" height="33" rx="1.5" fill="#3370ff"/><rect x="13" y="14" width="3" height="15" fill="#fff"/><rect x="22" y="14" width="3" height="15" fill="#fff"/></svg>
<div class="a" style="left:1661px;top:1513px;width:1342px;height:71px;border:2px solid #3370ff;border-radius:8px;background:#fff"></div>
<svg class="a" style="left:1683px;top:1532px" width="34" height="32" viewBox="0 0 34 32" fill="none" stroke="#3370ff" stroke-width="2.8" stroke-linecap="butt"><path d="M13.4 7.7Q18.5 2 23.5 1.8Q31.2 2.2 31.6 9.5Q31.3 14 25 18.8"/><path d="M8.6 12Q2.6 17 2.6 21.8Q3 29.6 10.5 29.9Q15 29.6 20.3 23.7"/><path d="M11.8 20.5L21.7 10.6"/></svg>
<div class="a t" style="left:1723px;top:1529px;font-size:28px;line-height:40px;color:#bfbfbf">请输入聊天内容，Shift+Enter换行，@指定智能体</div>
<svg class="a" style="left:3036px;top:1524px" width="42" height="42" viewBox="0 0 42 42" fill="#3370ff"><path d="M1.3 17L39.6 2L9.5 21.2Z"/><path d="M12.3 23.3L39.6 2L33.8 34.2Z"/><path d="M13 27L21.8 31.8L13 40.6Z"/></svg>
<div class="a t" style="left:2207px;top:1590px;font-size:24px;line-height:36px;color:#86909c">内容由AI生成，仅供参考</div>
<!-- bottom fade -->
<div class="a" style="left:0;top:1545px;width:1560px;height:79px;background:linear-gradient(to bottom,rgba(0,0,0,0),rgba(0,0,0,0.055));-webkit-mask-image:linear-gradient(to right,rgba(0,0,0,0.15) 0,rgba(0,0,0,0.4) 500px,#000 900px)"></div>
<div class="a" style="left:1560px;top:1575px;width:1546px;height:49px;background:linear-gradient(to bottom,rgba(0,0,0,0),rgba(0,0,0,0.03))"></div>

</body></html>
